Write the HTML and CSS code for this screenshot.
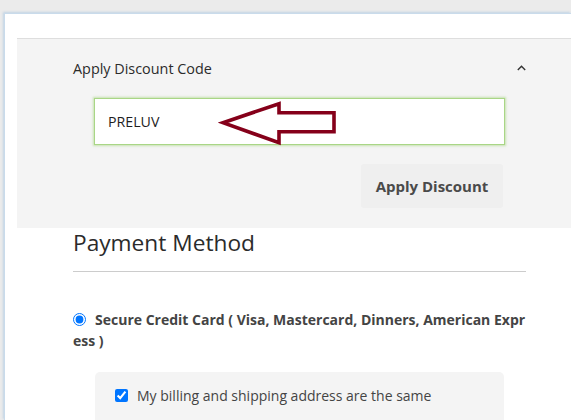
FILE: index.html
```html
<!DOCTYPE html>
<html lang="en">
<head>
<meta charset="utf-8">
<title>Checkout - Payment</title>
<link rel="stylesheet" href="styles.css">
</head>
<body>
<div class="page">
  <div class="panel">
    <section class="discount">
      <div class="discount-head">
        <span class="discount-title">Apply Discount Code</span>
        <svg class="caret" width="9" height="6" viewBox="0 0 9 6"><polyline points="0.8,5 4.5,1.3 8.2,5" fill="none" stroke="#333" stroke-width="1.4"/></svg>
      </div>
      <div class="code-field">
        <span class="code-value">PRELUV</span>
        <svg class="arrow" width="122" height="50" viewBox="0 0 122 50"><polygon points="5,24.7 61,5.7 61,14.7 116,14.7 116,33.7 61,33.7 61,44.7" fill="none" stroke="#85001a" stroke-width="3.6" stroke-linejoin="miter"/></svg>
      </div>
      <div class="discount-actions">
        <button class="apply-btn" type="button">Apply Discount</button>
      </div>
    </section>
    <section class="payment">
      <h2 class="payment-title">Payment Method</h2>
      <div class="method">
        <input class="radio" type="radio" name="method" checked><span class="method-label">Secure Credit Card ( Visa, Mastercard, Dinners, American Express )</span>
      </div>
      <div class="billing">
        <label class="billing-row"><input class="check" type="checkbox" checked><span>My billing and shipping address are the same</span></label>
      </div>
    </section>
  </div>
</div>
</body>
</html>
```
FILE: styles.css
```css
html, body {
  margin: 0;
  padding: 0;
}
body {
  background: #ebebeb;
  font-family: "Open Sans", "Liberation Sans", sans-serif;
  color: #333;
  overflow: hidden;
  height: 420px;
}
.page {
  padding: 13px 0 0 4px;
}
.panel {
  background: #fff;
  border-top: 1px solid #c9dbeb;
  border-left: 1px solid #c9dbeb;
  box-shadow: -1px -1px 2px rgba(120, 170, 215, 0.35);
  padding: 24px 0 0 12px;
  height: 382px;
}
.discount {
  background: #f4f4f4;
  border-top: 1px solid #dedede;
  padding: 20px 0 20px 56px;
}
.discount-head {
  width: 453px;
  display: flex;
  justify-content: space-between;
  align-items: center;
  height: 20px;
}
.discount-title {
  font-size: 14.4px;
  line-height: 20px;
  color: #2b2b2b;
}
.caret {
  display: block;
  margin-top: -3px;
}
.code-field {
  position: relative;
  box-sizing: border-box;
  margin: 19px 0 0 21px;
  width: 411px;
  height: 47px;
  background: #fff;
  border: 1px solid #a9d686;
  box-shadow: 0 0 2px 1px rgba(160, 210, 120, 0.55);
  display: flex;
  align-items: center;
  padding: 0 13px;
}
.code-value {
  font-size: 14.2px;
  color: #1e1e1e;
}
.arrow {
  position: absolute;
  left: 123px;
  top: -1px;
}
.discount-actions {
  margin: 19px 0 0 21px;
  width: 411px;
  display: flex;
  justify-content: flex-end;
}
.apply-btn {
  margin-right: 2px;
  width: 142px;
  height: 44px;
  border: none;
  border-radius: 3px;
  background: #efefef;
  color: #4a4a4a;
  font-family: "Open Sans", "Liberation Sans", sans-serif;
  font-weight: 700;
  font-size: 15px;
  padding: 0;
}
.payment {
  margin-left: 56px;
  width: 453px;
}
.payment-title {
  margin: 2px 0 0;
  font-size: 22.7px;
  line-height: 26px;
  font-weight: 400;
  color: #2b2b2b;
  padding-bottom: 15px;
  border-bottom: 1px solid #cccccc;
}
.method {
  margin-top: 37px;
  font-size: 14px;
  line-height: 21px;
  font-weight: 700;
  color: #444;
  word-break: break-all;
}
.radio {
  margin: 0 9px 0 0;
  width: 13px;
  height: 13px;
  vertical-align: -1px;
}
.billing {
  margin: 21px 0 0 22px;
  width: 409px;
  height: 48px;
  background: #f4f4f4;
  border-radius: 5px 5px 0 0;
  box-sizing: border-box;
  padding: 13px 0 0 20px;
}
.billing-row {
  display: flex;
  align-items: center;
  gap: 9px;
  font-size: 14px;
  line-height: 21px;
  color: #444;
}
.check {
  margin: 0;
  width: 13px;
  height: 13px;
}
```
